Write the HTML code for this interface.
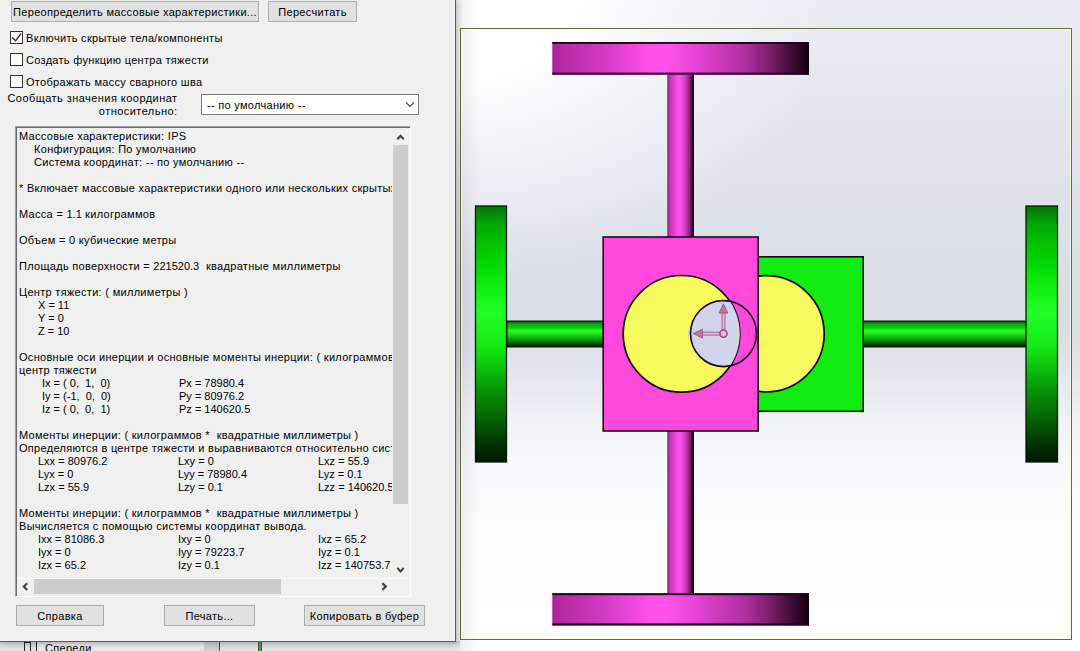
<!DOCTYPE html>
<html><head><meta charset="utf-8">
<style>
html,body{margin:0;padding:0;}
body{width:1080px;height:651px;overflow:hidden;position:relative;font-family:"Liberation Sans",sans-serif;font-size:11px;letter-spacing:0.3px;color:#000;background:#fff;}
.abs{position:absolute;}
#vp{position:absolute;left:0;top:0;width:1080px;height:651px;}
#tree{position:absolute;left:0;top:641px;width:460px;height:10px;background:#e6e6e6;overflow:hidden;}
#dlg{position:absolute;left:0;top:0;width:455px;height:641px;background:#f0f0f0;border-right:1px solid #5c5c5c;border-bottom:1px solid #5c5c5c;box-shadow:1px 1px 6px rgba(0,0,0,0.18), inset -1px 0 0 #f8f8f8;}
.btn{position:absolute;background:#e1e1e1;border:1px solid #adadad;box-sizing:border-box;text-align:center;white-space:nowrap;line-height:19px;padding-top:0.5px;}
.cb{position:absolute;width:13px;height:13px;box-sizing:border-box;border:1px solid #333;background:#fff;}
.lbl{position:absolute;white-space:nowrap;line-height:13px;}
#tb{position:absolute;left:15px;top:126px;width:396px;height:471px;box-sizing:border-box;border-top:1px solid #a0a0a0;border-left:1px solid #a0a0a0;border-right:1px solid #fff;border-bottom:1px solid #fff;background:#f0f0f0;box-shadow:inset 1px 1px 0 #696969;}
#txt{position:absolute;left:18px;top:128px;width:374px;height:450px;overflow:hidden;}
.ln{position:absolute;white-space:nowrap;line-height:13px;}
.num{letter-spacing:0;}
</style></head><body>
<svg id="vp" width="1080" height="651" viewBox="0 0 1080 651">
<defs>
  <linearGradient id="bg" x1="0" y1="0" x2="0" y2="651" gradientUnits="userSpaceOnUse">
    <stop offset="0" stop-color="#eaecf2"/>
    <stop offset="0.2" stop-color="#e2e5ec"/>
    <stop offset="0.42" stop-color="#dadee7"/>
    <stop offset="0.5" stop-color="#d9dde6"/>
    <stop offset="0.53" stop-color="#dde0e8"/>
    <stop offset="0.585" stop-color="#e5e8ee"/>
    <stop offset="0.645" stop-color="#f1f2f6"/>
    <stop offset="0.71" stop-color="#f8f9fb"/>
    <stop offset="0.8" stop-color="#fcfcfd"/>
    <stop offset="1" stop-color="#fefefe"/>
  </linearGradient>
  <linearGradient id="shL" x1="455" y1="0" x2="480" y2="0" gradientUnits="userSpaceOnUse">
    <stop offset="0" stop-color="#000" stop-opacity="0.12"/>
    <stop offset="0.3" stop-color="#000" stop-opacity="0.05"/>
    <stop offset="1" stop-color="#000" stop-opacity="0"/>
  </linearGradient>
  <linearGradient id="pw" x1="552" y1="0" x2="809" y2="0" gradientUnits="userSpaceOnUse">
    <stop offset="0" stop-color="#a82494"/>
    <stop offset="0.04" stop-color="#b82aa4"/>
    <stop offset="0.2" stop-color="#d23ac2"/>
    <stop offset="0.38" stop-color="#ff50ea"/>
    <stop offset="0.45" stop-color="#ff52ea"/>
    <stop offset="0.58" stop-color="#e040d0"/>
    <stop offset="0.75" stop-color="#b030a2"/>
    <stop offset="0.84" stop-color="#802070"/>
    <stop offset="0.94" stop-color="#3a0a32"/>
    <stop offset="1" stop-color="#140010"/>
  </linearGradient>
  <linearGradient id="ps" x1="667.3" y1="0" x2="694" y2="0" gradientUnits="userSpaceOnUse">
    <stop offset="0" stop-color="#7a2070"/>
    <stop offset="0.1" stop-color="#c436b4"/>
    <stop offset="0.25" stop-color="#e040d0"/>
    <stop offset="0.42" stop-color="#ff55ec"/>
    <stop offset="0.55" stop-color="#f04ae0"/>
    <stop offset="0.7" stop-color="#c838b0"/>
    <stop offset="0.85" stop-color="#802070"/>
    <stop offset="0.94" stop-color="#300828"/>
    <stop offset="1" stop-color="#0c000c"/>
  </linearGradient>
  <linearGradient id="gw" x1="0" y1="205" x2="0" y2="462" gradientUnits="userSpaceOnUse">
    <stop offset="0" stop-color="#047404"/>
    <stop offset="0.08" stop-color="#04aa04"/>
    <stop offset="0.2" stop-color="#00d000"/>
    <stop offset="0.3" stop-color="#0cec0c"/>
    <stop offset="0.42" stop-color="#22ff28"/>
    <stop offset="0.55" stop-color="#16e816"/>
    <stop offset="0.62" stop-color="#0cc80c"/>
    <stop offset="0.72" stop-color="#089408"/>
    <stop offset="0.84" stop-color="#056005"/>
    <stop offset="0.92" stop-color="#033803"/>
    <stop offset="1" stop-color="#001800"/>
  </linearGradient>
  <linearGradient id="ga" x1="0" y1="321" x2="0" y2="347" gradientUnits="userSpaceOnUse">
    <stop offset="0" stop-color="#063806"/>
    <stop offset="0.1" stop-color="#10a010"/>
    <stop offset="0.25" stop-color="#00cc00"/>
    <stop offset="0.38" stop-color="#22ff22"/>
    <stop offset="0.55" stop-color="#18d018"/>
    <stop offset="0.75" stop-color="#089008"/>
    <stop offset="0.92" stop-color="#023a02"/>
    <stop offset="1" stop-color="#001000"/>
  </linearGradient>
  <radialGradient id="tl" cx="0.5" cy="0.5" r="0.5">
    <stop offset="0" stop-color="#fff" stop-opacity="1"/>
    <stop offset="0.3" stop-color="#fff" stop-opacity="0.95"/>
    <stop offset="0.6" stop-color="#fff" stop-opacity="0.5"/>
    <stop offset="1" stop-color="#fff" stop-opacity="0"/>
  </radialGradient>
  <clipPath id="yc"><circle cx="681.5" cy="333.8" r="58.3"/></clipPath>
</defs>
<rect x="455" y="0" width="625" height="651" fill="url(#bg)"/>
<ellipse cx="465" cy="-10" rx="370" ry="290" fill="url(#tl)"/>
<rect x="455" y="0" width="30" height="651" fill="url(#shL)"/>
<!-- frame -->
<rect x="460.5" y="28.5" width="611" height="611" fill="none" stroke="#6b6b3a" stroke-width="1"/>
<rect x="461.5" y="29.5" width="609" height="609" fill="none" stroke="#fbfbd0" stroke-width="1" opacity="0.8"/>
<!-- top pink wheel + shaft -->
<rect x="667.3" y="74" width="26.7" height="163" fill="url(#ps)"/>
<rect x="667.3" y="431" width="26.7" height="162.5" fill="url(#ps)"/>
<rect x="552.3" y="42" width="256.7" height="32.7" fill="url(#pw)"/><rect x="552.3" y="42" width="256.7" height="2" fill="#240220"/><rect x="552.3" y="72.6" width="256.7" height="2.1" fill="#240220"/><rect x="807.6" y="42" width="1.4" height="32.7" fill="#100010"/>
<rect x="552.3" y="593.2" width="256.7" height="32.3" fill="url(#pw)"/><rect x="552.3" y="593.2" width="256.7" height="2" fill="#240220"/><rect x="552.3" y="623.4" width="256.7" height="2.1" fill="#240220"/><rect x="807.6" y="593.2" width="1.4" height="32.3" fill="#100010"/>
<!-- green axles and wheels -->
<rect x="507" y="321" width="96" height="26" fill="url(#ga)" stroke="#042004" stroke-width="1"/>
<rect x="863" y="321" width="163" height="26" fill="url(#ga)" stroke="#042004" stroke-width="1"/>
<rect x="475.5" y="206" width="31" height="256" fill="url(#gw)" stroke="#021a02" stroke-width="1.3"/>
<rect x="1026" y="206" width="31.5" height="256" fill="url(#gw)" stroke="#021a02" stroke-width="1.3"/>
<!-- green square -->
<rect x="758" y="256.8" width="105.2" height="154.5" fill="#12ec12" stroke="#081208" stroke-width="1.6"/>
<circle cx="766" cy="333.8" r="58.2" fill="#f6fa5c" stroke="#0a0a0a" stroke-width="1.7"/>
<!-- pink square -->
<rect x="603.2" y="237" width="155" height="194" fill="#ff48dc" stroke="#200620" stroke-width="1.6"/>
<circle cx="681.5" cy="333.8" r="58.3" fill="#f6fa5c" stroke="#0a0a0a" stroke-width="1.7"/>
<circle cx="723.5" cy="333.6" r="33" fill="#d2d4ec" clip-path="url(#yc)"/>
<circle cx="723.5" cy="333.6" r="33" fill="none" stroke="#1a0618" stroke-width="1.6"/>
<path d="M 739.9 283.5" fill="none"/>
<!-- triad -->
<g>
  <rect x="722" y="312" width="3" height="19" fill="#e2b4d2" stroke="#a8588a" stroke-width="0.9"/>
  <path d="M 719.2 313 L 723.5 303.8 L 727.8 313 Z" fill="#c07aa2" stroke="#a05082" stroke-width="0.9"/>
  <rect x="702" y="332.1" width="19" height="3" fill="#e2b4d2" stroke="#a8588a" stroke-width="0.9"/>
  <path d="M 702.5 329.2 L 693.3 333.6 L 702.5 338 Z" fill="#c07aa2" stroke="#a05082" stroke-width="0.9"/>
  <circle cx="723.5" cy="333.6" r="3.6" fill="#e8b8d4" stroke="#9a4a7a" stroke-width="1.5"/>
  <path d="M 688.5 329.5 L 688.5 338" stroke="#d8b8a0" stroke-width="0.8" opacity="0.7"/>
  <path d="M 721 297 L 721 304" stroke="#d8c080" stroke-width="0.8" opacity="0.7"/>
</g>
</svg>
<div id="tree">
  <div class="abs" style="left:0;top:0;width:204px;height:10px;background:linear-gradient(#c4c4c4,#dedede 60%,#e2e2e2);"></div>
  <div class="abs" style="left:37px;top:0;width:167px;height:10px;background:linear-gradient(#cfcfcf,#e6e6e6 60%,#eaeaea);"></div>
  <div class="abs" style="left:204px;top:0;width:15px;height:10px;background:linear-gradient(#bdbdbd,#d4d4d4);"></div>
  <div class="abs" style="left:219px;top:0;width:1px;height:10px;background:#4a4a4a;"></div>
  <div class="abs" style="left:220px;top:0;width:38px;height:10px;background:linear-gradient(#cdcdcd,#e6e6e6);"></div>
  <div class="abs" style="left:258px;top:0;width:4px;height:10px;background:#5a9a5a;border-left:1px solid #2a5a2a;border-right:1px solid #2a5a2a;box-sizing:border-box;"></div>
  <div class="abs" style="left:262px;top:0;width:198px;height:10px;background:linear-gradient(#c8c8c8,#e2e2e2 70%,#e8e8e8);"></div>
  <div class="abs" style="left:24px;top:1px;width:7px;height:12px;border:1px solid #222;box-sizing:border-box;"></div>
  <div class="abs" style="left:36px;top:0;width:1px;height:10px;background:#222;"></div>
  <div class="abs" style="left:45px;top:1px;white-space:nowrap;line-height:13px;">Спереди</div>
</div>
<div id="dlg">
  <div class="btn" style="left:11px;top:1px;width:248px;height:21px;">Переопределить массовые характеристики...</div>
  <div class="btn" style="left:268px;top:1px;width:89px;height:21px;">Пересчитать</div>
  <div class="cb" style="left:10px;top:31px;"></div>
  <div class="lbl" style="left:26px;top:31.7px;">Включить скрытые тела/компоненты</div>
  <div class="cb" style="left:10px;top:53px;"></div>
  <div class="lbl" style="left:26px;top:53.7px;">Создать функцию центра тяжести</div>
  <div class="cb" style="left:10px;top:75px;"></div>
  <div class="lbl" style="left:26px;top:75.7px;">Отображать массу сварного шва</div>
  <div class="lbl" style="left:0px;top:91.5px;width:177.5px;text-align:right;letter-spacing:0.45px;">Сообщать значения координат<br>относительно:</div>
  <div class="abs" style="left:201px;top:94px;width:218px;height:21px;box-sizing:border-box;border:1px solid #7a7a7a;background:#fff;"></div>
  <div class="lbl" style="left:207px;top:98.5px;">-- по умолчанию --</div>
  <div id="tb"></div>
<div id="txt">
<div class="ln" style="left:1px;top:1.5px">Массовые характеристики: IPS</div>
<div class="ln" style="left:16px;top:14.5px">Конфигурация: По умолчанию</div>
<div class="ln" style="left:16px;top:27.5px">Система координат: -- по умолчанию --</div>
<div class="ln" style="left:1px;top:53.5px">* Включает массовые характеристики одного или нескольких скрытых компонентов/тел.</div>
<div class="ln" style="left:1px;top:79.5px">Масса = <span class=num>1.1</span> килограммов</div>
<div class="ln" style="left:1px;top:105.5px">Объем = 0 кубические метры</div>
<div class="ln" style="left:1px;top:131.5px">Площадь поверхности = <span class=num>221520.3</span>&nbsp; квадратные миллиметры</div>
<div class="ln" style="left:1px;top:157.5px">Центр тяжести: ( миллиметры )</div>
<div class="ln num" style="left:20px;top:170.5px">X = 11</div>
<div class="ln num" style="left:20px;top:183.5px">Y = 0</div>
<div class="ln num" style="left:20px;top:196.5px">Z = 10</div>
<div class="ln" style="left:1px;top:222.5px">Основные оси инерции и основные моменты инерции: ( килограммов * квадратные миллиметры )</div>
<div class="ln" style="left:1px;top:235.5px">центр тяжести</div>
<div class="ln num" style="left:24px;top:248.5px">Ix = ( 0,&nbsp; 1,&nbsp; 0)</div>
<div class="ln num" style="left:161px;top:248.5px">Px = 78980.4</div>
<div class="ln num" style="left:24px;top:261.5px">Iy = (-1,&nbsp; 0,&nbsp; 0)</div>
<div class="ln num" style="left:161px;top:261.5px">Py = 80976.2</div>
<div class="ln num" style="left:24px;top:274.5px">Iz = ( 0,&nbsp; 0,&nbsp; 1)</div>
<div class="ln num" style="left:161px;top:274.5px">Pz = 140620.5</div>
<div class="ln" style="left:1px;top:300.5px">Моменты инерции: ( килограммов *&nbsp; квадратные миллиметры )</div>
<div class="ln" style="left:1px;top:313.5px">Определяются в центре тяжести и выравниваются относительно системы координат вывода.</div>
<div class="ln num" style="left:20px;top:326.5px">Lxx = 80976.2</div>
<div class="ln num" style="left:160px;top:326.5px">Lxy = 0</div>
<div class="ln num" style="left:300px;top:326.5px">Lxz = 55.9</div>
<div class="ln num" style="left:20px;top:339.5px">Lyx = 0</div>
<div class="ln num" style="left:160px;top:339.5px">Lyy = 78980.4</div>
<div class="ln num" style="left:300px;top:339.5px">Lyz = 0.1</div>
<div class="ln num" style="left:20px;top:352.5px">Lzx = 55.9</div>
<div class="ln num" style="left:160px;top:352.5px">Lzy = 0.1</div>
<div class="ln num" style="left:300px;top:352.5px">Lzz = 140620.5</div>
<div class="ln" style="left:1px;top:378.5px">Моменты инерции: ( килограммов *&nbsp; квадратные миллиметры )</div>
<div class="ln" style="left:1px;top:391.5px">Вычисляется с помощью системы координат вывода.</div>
<div class="ln num" style="left:20px;top:404.5px">Ixx = 81086.3</div>
<div class="ln num" style="left:160px;top:404.5px">Ixy = 0</div>
<div class="ln num" style="left:300px;top:404.5px">Ixz = 65.2</div>
<div class="ln num" style="left:20px;top:417.5px">Iyx = 0</div>
<div class="ln num" style="left:160px;top:417.5px">Iyy = 79223.7</div>
<div class="ln num" style="left:300px;top:417.5px">Iyz = 0.1</div>
<div class="ln num" style="left:20px;top:430.5px">Izx = 65.2</div>
<div class="ln num" style="left:160px;top:430.5px">Izy = 0.1</div>
<div class="ln num" style="left:300px;top:430.5px">Izz = 140753.7</div>

</div>

  <div class="abs" style="left:393px;top:128px;width:15px;height:450px;background:#f0f0f0;"></div>
  <div class="abs" style="left:393px;top:145px;width:15px;height:359px;background:#cdcdcd;"></div>
  <div class="abs" style="left:18px;top:578px;width:390px;height:17px;background:#f0f0f0;border-top:1px solid #fafafa;box-sizing:border-box;"></div>
  <div class="abs" style="left:34px;top:579px;width:247px;height:15px;background:#cdcdcd;"></div>
  <svg class="abs" style="left:0;top:0;" width="455" height="641">
    <g fill="none" stroke="#404040" stroke-width="2.1">
      <path d="M397.3 139.2 L400.5 135.7 L403.7 139.2"/>
      <path d="M397.3 567.9 L400.5 571.4 L403.7 567.9"/>
      <path d="M27.2 583.2 L23.8 586.6 L27.2 590"/>
      <path d="M382.4 583.2 L385.8 586.6 L382.4 590"/>
    </g>
    <path d="M406 102.5 L410 106.5 L414 102.5" fill="none" stroke="#444" stroke-width="1.1"/>
    <path d="M12 37.3 L15.6 40.8 L21 33.8" fill="none" stroke="#333" stroke-width="1.4"/>
  </svg>
  <div class="btn" style="left:16px;top:605px;width:88px;height:21px;">Справка</div>
  <div class="btn" style="left:164px;top:605px;width:91px;height:21px;">Печать...</div>
  <div class="btn" style="left:304px;top:605px;width:121px;height:21px;">Копировать в буфер</div>
</div>
</body></html>
